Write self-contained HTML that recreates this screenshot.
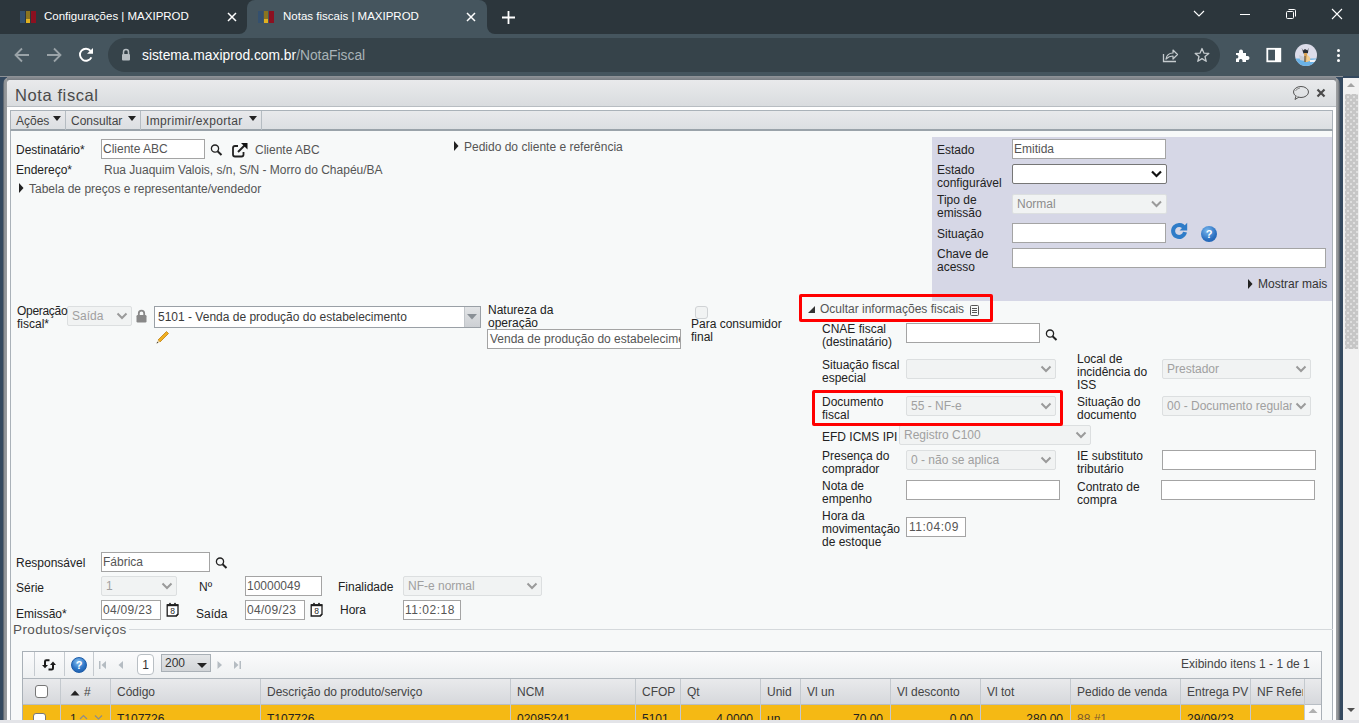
<!DOCTYPE html>
<html><head><meta charset="utf-8">
<style>
*{margin:0;padding:0;box-sizing:border-box}
html,body{width:1359px;height:723px;overflow:hidden;background:#34495f;font-family:"Liberation Sans",sans-serif}
.a{position:absolute}
.t{position:absolute;white-space:nowrap;font-size:12px;color:#222;line-height:13px}
.g{color:#555}
.inp{position:absolute;background:#fff;border:1px solid #a4a4a4}
.dis{position:absolute;background:#f1f3f3;border:1px solid #dcdfe0;border-radius:2px}
.chev{position:absolute;width:7px;height:7px;border-right:2px solid #9a9a9a;border-bottom:2px solid #9a9a9a;transform:rotate(45deg)}
</style></head><body>

<!-- CHROME TAB BAR -->
<div class="a" style="left:0;top:0;width:1359px;height:34px;background:#2c363c"></div>
<!-- active tab -->
<div class="a" style="left:247px;top:0;width:240px;height:34px;background:#45555e;border-radius:8px 8px 0 0"></div>
<div class="a" style="left:239px;top:26px;width:8px;height:8px;background:#45555e"></div>
<div class="a" style="left:239px;top:18px;width:8px;height:16px;background:#2c363c;border-bottom-right-radius:8px"></div>
<div class="a" style="left:487px;top:26px;width:8px;height:8px;background:#45555e"></div>
<div class="a" style="left:487px;top:18px;width:8px;height:16px;background:#2c363c;border-bottom-left-radius:8px"></div>

<!-- favicons -->
<div class="a" style="left:20px;top:11px;width:5px;height:12px;background:#34506e"></div>
<div class="a" style="left:26px;top:11px;width:4px;height:12px;background:#8a7420"></div>
<div class="a" style="left:26px;top:19px;width:4px;height:4px;background:#e0b020"></div>
<div class="a" style="left:31px;top:11px;width:5px;height:12px;background:#8c1020"></div>
<div class="a" style="left:258px;top:11px;width:5px;height:12px;background:#34506e"></div>
<div class="a" style="left:264px;top:11px;width:4px;height:12px;background:#8a7420"></div>
<div class="a" style="left:264px;top:19px;width:4px;height:4px;background:#e0b020"></div>
<div class="a" style="left:269px;top:11px;width:5px;height:12px;background:#8c1020"></div>

<div class="t" style="left:44px;top:10px;font-size:11.5px;color:#fff">Configurações | MAXIPROD</div>
<div class="t" style="left:283px;top:10px;font-size:11.5px;color:#fff">Notas fiscais | MAXIPROD</div>
<svg class="a" style="left:227px;top:12px" width="10" height="10"><path d="M1 1L9 9M9 1L1 9" stroke="#fff" stroke-width="1.5"/></svg>
<svg class="a" style="left:466px;top:12px" width="10" height="10"><path d="M1 1L9 9M9 1L1 9" stroke="#fff" stroke-width="1.5"/></svg>
<svg class="a" style="left:502px;top:11px" width="13" height="13"><path d="M6.5 0V13M0 6.5H13" stroke="#fff" stroke-width="1.8"/></svg>

<!-- window controls -->
<svg class="a" style="left:1193px;top:10px" width="12" height="8"><path d="M1 1L6 6L11 1" stroke="#fff" stroke-width="1.1" fill="none"/></svg>
<div class="a" style="left:1240px;top:14px;width:10px;height:1px;background:#fff"></div>
<svg class="a" style="left:1285px;top:8px" width="12" height="12"><rect x="1.5" y="3.5" width="7" height="7" rx="1" stroke="#fff" fill="none"/><path d="M3.5 1.5H9.5Q10.5 1.5 10.5 2.5V8.5" stroke="#fff" fill="none"/></svg>
<svg class="a" style="left:1331px;top:8px" width="12" height="12"><path d="M1 1L11 11M11 1L1 11" stroke="#fff" stroke-width="1.1"/></svg>

<!-- TOOLBAR -->
<div class="a" style="left:0;top:34px;width:1359px;height:42px;background:#45555e"></div>
<div class="a" style="left:108px;top:38px;width:1112px;height:34px;background:#36434a;border-radius:17px"></div>
<svg class="a" style="left:14px;top:47px" width="16" height="16"><path d="M15 8H2M8 1.5L1.5 8L8 14.5" stroke="#9aa3a8" stroke-width="1.8" fill="none"/></svg>
<svg class="a" style="left:46px;top:47px" width="16" height="16"><path d="M1 8H14M8 1.5L14.5 8L8 14.5" stroke="#9aa3a8" stroke-width="1.8" fill="none"/></svg>
<svg class="a" style="left:78px;top:47px" width="16" height="16"><path d="M13.4 10.3A6 6 0 1 1 12.6 3.9" stroke="#fff" stroke-width="1.9" fill="none"/><path d="M15 1V6.7H9Z" fill="#fff"/></svg>
<svg class="a" style="left:121px;top:48px" width="10" height="13"><path d="M2.5 6V4A2.5 2.5 0 0 1 7.5 4V6" stroke="#b8bfc3" stroke-width="1.5" fill="none"/><rect x="1" y="6" width="8" height="6.5" rx="1" fill="#b8bfc3"/></svg>
<div class="t" style="left:142px;top:48px;font-size:13.8px;line-height:16px;color:#fff">sistema.maxiprod.com.br<span style="color:#a9b3b8">/NotaFiscal</span></div>

<svg class="a" style="left:1162px;top:47px" width="17" height="16"><path d="M1.5 7V14.5H14" stroke="#c5cbce" stroke-width="1.3" fill="none"/><path d="M4 12Q5 6 11 6V3L15.5 7.5L11 12V9Q7 9 4 12Z" stroke="#c5cbce" stroke-width="1.2" fill="none" stroke-linejoin="round"/></svg>
<svg class="a" style="left:1194px;top:47px" width="16" height="16"><path d="M8 1.5L9.9 6.1L14.8 6.4L11 9.5L12.2 14.3L8 11.6L3.8 14.3L5 9.5L1.2 6.4L6.1 6.1Z" stroke="#c5cbce" stroke-width="1.3" fill="none" stroke-linejoin="round"/></svg>
<svg class="a" style="left:1234px;top:47px" width="16" height="16"><path d="M2 6H5V4.5A2 2 0 0 1 9 4.5V6H12V9H13.5A2 2 0 0 1 13.5 13H12V15H8.5V13.5A1.8 1.8 0 0 0 5 13.5V15H2V11.5H3A1.8 1.8 0 0 0 3 8H2Z" fill="#fff"/></svg>
<svg class="a" style="left:1266px;top:47px" width="16" height="16"><rect x="1.3" y="1.8" width="13" height="12.5" stroke="#fff" stroke-width="1.8" fill="none"/><rect x="9" y="2" width="5" height="12" fill="#fff"/></svg>
<svg class="a" style="left:1295px;top:44px" width="22" height="22"><defs><clipPath id="av"><circle cx="11" cy="11" r="11"/></clipPath></defs><g clip-path="url(#av)"><rect width="22" height="22" fill="#dcdce9"/><rect y="14.5" width="22" height="8" fill="#6ab2e6"/><path d="M6.5 3.5L8 6.5L10 5L12.5 6.5L13.5 3.5L13 9L11 10L8.5 9.5Z" fill="#2a2e34"/><path d="M9 9L12 9L12.5 18L9.5 18Z" fill="#d9a050"/><path d="M12 11Q15.5 12 15.5 17L11 18Z" fill="#f0cc90"/><path d="M4 11L9 13L9 17L5 16Z" fill="#c8ccd4"/><path d="M15 16L21 15.5L21 18L15 18Z" fill="#f4f4f6"/><path d="M10 12V18" stroke="#555" stroke-width="1"/></g></svg>
<div class="a" style="left:1337px;top:49px;width:3px;height:3px;border-radius:50%;background:#fff"></div>
<div class="a" style="left:1337px;top:54px;width:3px;height:3px;border-radius:50%;background:#fff"></div>
<div class="a" style="left:1337px;top:59px;width:3px;height:3px;border-radius:50%;background:#fff"></div>

<!-- PAGE BACKGROUND -->
<div class="a" style="left:0;top:76px;width:1343px;height:1px;background:#8d9196"></div>
<div class="a" style="left:3px;top:77px;width:1337px;height:646px;background:linear-gradient(to right,#4c5560 0,#8e9296 1.5px,#9c9ea0 4px,#8e9296 8px,#8e9296 calc(100% - 5px),#a0a2a4 calc(100% - 4px),#909396 calc(100% - 2px),#4e5660 100%);border-radius:7px 7px 0 0"></div>
<div class="a" style="left:7px;top:77px;width:1329px;height:3px;background:linear-gradient(#8a8e93,#787d83)"></div>
<!-- page scrollbar -->
<div class="a" style="left:1343px;top:78px;width:16px;height:645px;background:#f1f1f1"></div>
<div class="a" style="left:1345px;top:94px;width:13px;height:255px;background-color:#c6c6c6;background-image:radial-gradient(circle,#dedede 0.9px,transparent 1.2px),radial-gradient(circle,#dedede 0.9px,transparent 1.2px);background-size:6px 6px;background-position:0 0,3px 3px"></div>
<svg class="a" style="left:1346px;top:82px" width="10" height="6"><path d="M1 5L5 1L9 5Z" fill="#a3a3a3"/></svg>
<svg class="a" style="left:1346px;top:707px" width="10" height="6"><path d="M1 1L5 5L9 1Z" fill="#505050"/></svg>

<!-- DIALOG -->
<div class="a" style="left:7px;top:80px;width:1329px;height:643px;background:#fff;border-radius:4px 4px 0 0;overflow:hidden">
  <div class="a" style="left:0;top:0;width:1329px;height:27px;background:linear-gradient(#e9eaec,#d9dcdf);border-bottom:1px solid #b8bdc2"></div>
</div>
<div class="t" style="left:15px;top:85px;font-size:16.5px;line-height:20px;color:#4a4a4a;letter-spacing:0.6px">Nota fiscal</div>
<svg class="a" style="left:1292px;top:85px" width="18" height="16"><ellipse cx="9" cy="7" rx="7.5" ry="5.5" stroke="#555" stroke-width="1" fill="none"/><path d="M3.5 6Q4.5 3.5 8 3" stroke="#777" stroke-width="0.8" fill="none"/><path d="M4 11L3 14.5L7 12" stroke="#555" fill="#e0e2e4"/></svg>
<svg class="a" style="left:1316px;top:88px" width="10" height="10"><path d="M1.5 1.5L8.5 8.5M8.5 1.5L1.5 8.5" stroke="#4a4a4a" stroke-width="2.2"/></svg>

<!-- menu toolbar -->
<div class="a" style="left:10px;top:110px;width:1323px;height:21px;background:linear-gradient(#e8e9eb,#dcdfe2);border:1px solid #aab2b9;border-bottom:2px solid #9aa3aa"></div>

<!-- content area -->
<div class="a" style="left:10px;top:131px;width:1323px;height:592px;background:#f7f9f9;border-left:1px solid #aab2b9;border-right:1px solid #aab2b9"></div>


<!-- ===== BODY SECTION 1 ===== -->
<div class="t" style="left:16px;top:144px">Destinatário*</div>
<div class="inp" style="left:101px;top:139px;width:104px;height:20px"></div>
<div class="t g" style="left:103px;top:143px">Cliente ABC</div>
<svg class="a" style="left:210px;top:144px" width="13" height="12"><circle cx="5" cy="4.6" r="3.6" stroke="#222" stroke-width="1.3" fill="none"/><path d="M7.6 7.3L11.5 11" stroke="#222" stroke-width="2"/></svg>
<svg class="a" style="left:231px;top:142px" width="18" height="16"><path d="M7 4H4Q2 4 2 6V12.5Q2 14.5 4 14.5H10.5Q12.5 14.5 12.5 12.5V10" stroke="#222" stroke-width="1.8" fill="none"/><path d="M7 10L14.5 2.5" stroke="#222" stroke-width="2"/><path d="M10 1H16.5V7.5Z" fill="#111"/></svg>
<div class="t g" style="left:255px;top:144px">Cliente ABC</div>
<div class="t" style="left:16px;top:164px">Endereço*</div>
<div class="t g" style="left:104px;top:164px">Rua Juaquim Valois, s/n, S/N - Morro do Chapéu/BA</div>
<svg class="a" style="left:19px;top:183px" width="5" height="10"><path d="M0 0L4.5 5L0 10Z" fill="#222"/></svg>
<div class="t g" style="left:29px;top:183px">Tabela de preços e representante/vendedor</div>
<svg class="a" style="left:454px;top:141px" width="5" height="10"><path d="M0 0L4.5 5L0 10Z" fill="#222"/></svg>
<div class="t g" style="left:464px;top:141px">Pedido do cliente e referência</div>

<!-- Estado panel -->
<div class="a" style="left:932px;top:137px;width:400px;height:164px;background:#d6d7e6"></div>
<div class="t" style="left:937px;top:144px">Estado</div>
<div class="inp" style="left:1012px;top:139px;width:154px;height:20px"></div>
<div class="t g" style="left:1014px;top:143px">Emitida</div>
<div class="t" style="left:937px;top:164px">Estado</div>
<div class="t" style="left:937px;top:177px">configurável</div>
<div class="a" style="left:1012px;top:164px;width:155px;height:20px;background:#fff;border:1px solid #767676;border-radius:2px"></div>
<svg class="a" style="left:1151px;top:170px" width="11" height="8"><path d="M1 1.5L5.5 6L10 1.5" stroke="#111" stroke-width="2.2" fill="none"/></svg>
<div class="t" style="left:937px;top:194px">Tipo de</div>
<div class="t" style="left:937px;top:207px">emissão</div>
<div class="dis" style="left:1012px;top:194px;width:155px;height:20px"></div>
<div class="t" style="left:1017px;top:198px;color:#8c8c8c">Normal</div>
<svg class="a" style="left:1151px;top:200px" width="11" height="8"><path d="M1 1.5L5.5 6L10 1.5" stroke="#9a9a9a" stroke-width="2" fill="none"/></svg>
<div class="t" style="left:937px;top:228px">Situação</div>
<div class="inp" style="left:1012px;top:223px;width:154px;height:20px"></div>
<svg class="a" style="left:1170px;top:222px" width="18" height="18"><path d="M15 10.2A6 6 0 1 1 14.2 5.8" stroke="#2f7cc8" stroke-width="4" fill="none"/><path d="M17.2 0.8V8.6H9.6Z" fill="#2f7cc8"/></svg>
<div class="a" style="left:1201px;top:226px;width:16px;height:16px;border-radius:50%;background:radial-gradient(circle at 40% 30%,#7ab8ee,#2a6fc0 60%,#1d5aa8);color:#fff;font:bold 11px/16px 'Liberation Sans';text-align:center">?</div>
<div class="t" style="left:937px;top:248px">Chave de</div>
<div class="t" style="left:937px;top:261px">acesso</div>
<div class="inp" style="left:1012px;top:248px;width:314px;height:20px"></div>
<svg class="a" style="left:1248px;top:279px" width="5" height="10"><path d="M0 0L4.5 5L0 10Z" fill="#222"/></svg>
<div class="t" style="left:1258px;top:278px;color:#333">Mostrar mais</div>


<!-- menu items -->
<div class="t" style="left:16px;top:115px;color:#444">Ações</div>
<svg class="a" style="left:53px;top:116px" width="8" height="5"><path d="M0 0H8L4 5Z" fill="#222"/></svg>
<div class="a" style="left:65px;top:111px;width:1px;height:19px;background:#b5bcc2"></div>
<div class="t" style="left:71px;top:115px;color:#444">Consultar</div>
<svg class="a" style="left:128px;top:116px" width="8" height="5"><path d="M0 0H8L4 5Z" fill="#222"/></svg>
<div class="a" style="left:140px;top:111px;width:1px;height:19px;background:#b5bcc2"></div>
<div class="t" style="left:146px;top:115px;color:#444;letter-spacing:0.35px">Imprimir/exportar</div>
<svg class="a" style="left:249px;top:116px" width="8" height="5"><path d="M0 0H8L4 5Z" fill="#222"/></svg>
<div class="a" style="left:261px;top:111px;width:1px;height:19px;background:#b5bcc2"></div>

<!-- Operacao fiscal row -->
<div class="t" style="left:17px;top:305px;letter-spacing:-0.3px;z-index:2">Operação</div>
<div class="t" style="left:17px;top:318px">fiscal*</div>
<div class="dis" style="left:67px;top:306px;width:65px;height:20px"></div>
<div class="t" style="left:72px;top:310px;color:#a0a0a0;width:43px;overflow:hidden">Saída</div>
<svg class="a" style="left:116px;top:312px" width="12" height="8"><path d="M1.5 1.5L6 6L10.5 1.5" stroke="#9a9a9a" stroke-width="2" fill="none"/></svg>
<svg class="a" style="left:136px;top:309px" width="11" height="14"><path d="M2.8 6.5V4.3A2.7 2.7 0 0 1 8.2 4.3V6.5" stroke="#888" stroke-width="1.8" fill="none"/><rect x="0.5" y="6" width="10" height="7.5" rx="1.2" fill="#888"/></svg>
<div class="inp" style="left:154px;top:306px;width:327px;height:22px;border-color:#9aa0a6"></div>
<div class="a" style="left:464px;top:307px;width:16px;height:20px;background:linear-gradient(#e2e4e6,#cdd0d4);border-left:1px solid #c2c6ca"></div>
<svg class="a" style="left:467px;top:314px" width="10" height="6"><path d="M0 0H10L5 5.5Z" fill="#8a9096"/></svg>
<div class="t" style="left:158px;top:311px;color:#3a3a3a">5101 - Venda de produção do estabelecimento</div>
<svg class="a" style="left:155px;top:330px" width="15" height="15"><path d="M3 10L11.5 1.5L13.5 3.5L5 12Z" fill="#f0b020" stroke="#c08010" stroke-width="0.8"/><path d="M3 10L1.5 13.5L5 12Z" fill="#e8d0a0"/><path d="M1.5 13.5L2.3 11.7L3.3 12.7Z" fill="#333"/></svg>
<div class="t" style="left:488px;top:304px">Natureza da</div>
<div class="t" style="left:488px;top:317px">operação</div>
<div class="inp" style="left:487px;top:329px;width:194px;height:20px;overflow:hidden"><div class="t" style="left:2px;top:3px;color:#555">Venda de produção do estabelecimento</div></div>
<div class="a" style="left:695px;top:306px;width:13px;height:13px;border:1px solid #d0d3d5;border-radius:3px;background:#f1f3f3"></div>
<div class="t" style="left:691px;top:318px">Para consumidor</div>
<div class="t" style="left:691px;top:331px">final</div>

<!-- fiscal info -->
<div class="a" style="left:799px;top:294px;width:194px;height:28px;border:3px solid #f00;border-radius:2px"></div>
<svg class="a" style="left:808px;top:306px" width="7" height="7"><path d="M7 0V7H0Z" fill="#333"/></svg>
<div class="t g" style="left:820px;top:303px">Ocultar informações fiscais</div>
<svg class="a" style="left:969px;top:304px" width="11" height="12"><rect x="1.5" y="1.5" width="8" height="10" rx="1" stroke="#555" fill="none"/><path d="M3 4.5H8M3 6.5H8M3 8.5H8" stroke="#555"/></svg>
<div class="t" style="left:822px;top:323px">CNAE fiscal</div>
<div class="t" style="left:822px;top:336px">(destinatário)</div>
<div class="inp" style="left:906px;top:323px;width:134px;height:20px"></div>
<svg class="a" style="left:1045px;top:329px" width="13" height="12"><circle cx="5" cy="4.6" r="3.6" stroke="#222" stroke-width="1.3" fill="none"/><path d="M7.6 7.3L11.5 11" stroke="#222" stroke-width="2"/></svg>
<div class="t" style="left:822px;top:359px">Situação fiscal</div>
<div class="t" style="left:822px;top:372px">especial</div>
<div class="dis" style="left:906px;top:359px;width:150px;height:20px"></div>
<svg class="a" style="left:1040px;top:365px" width="12" height="8"><path d="M1.5 1.5L6 6L10.5 1.5" stroke="#9a9a9a" stroke-width="2" fill="none"/></svg>
<div class="t" style="left:1077px;top:353px">Local de</div>
<div class="t" style="left:1077px;top:366px">incidência do</div>
<div class="t" style="left:1077px;top:379px">ISS</div>
<div class="dis" style="left:1162px;top:359px;width:149px;height:20px"></div>
<div class="t" style="left:1167px;top:363px;color:#a0a0a0;width:127px;overflow:hidden">Prestador</div>
<svg class="a" style="left:1295px;top:365px" width="12" height="8"><path d="M1.5 1.5L6 6L10.5 1.5" stroke="#9a9a9a" stroke-width="2" fill="none"/></svg>
<div class="t" style="left:822px;top:396px">Documento</div>
<div class="t" style="left:822px;top:409px">fiscal</div>
<div class="dis" style="left:906px;top:396px;width:150px;height:20px"></div>
<div class="t" style="left:911px;top:400px;color:#a0a0a0;width:128px;overflow:hidden">55 - NF-e</div>
<svg class="a" style="left:1040px;top:402px" width="12" height="8"><path d="M1.5 1.5L6 6L10.5 1.5" stroke="#9a9a9a" stroke-width="2" fill="none"/></svg>
<div class="t" style="left:1077px;top:396px">Situação do</div>
<div class="t" style="left:1077px;top:409px">documento</div>
<div class="dis" style="left:1162px;top:396px;width:149px;height:20px"></div>
<div class="t" style="left:1167px;top:400px;color:#a0a0a0;width:125px;overflow:hidden">00 - Documento regular</div>
<svg class="a" style="left:1295px;top:402px" width="12" height="8"><path d="M1.5 1.5L6 6L10.5 1.5" stroke="#9a9a9a" stroke-width="2" fill="none"/></svg>
<div class="dis" style="left:899px;top:425px;width:192px;height:20px"></div>
<div class="t" style="left:904px;top:429px;color:#a0a0a0;width:170px;overflow:hidden">Registro C100</div>
<svg class="a" style="left:1075px;top:431px" width="12" height="8"><path d="M1.5 1.5L6 6L10.5 1.5" stroke="#9a9a9a" stroke-width="2" fill="none"/></svg>
<div class="a" style="left:812px;top:390px;width:251px;height:36px;border:3px solid #f00;border-radius:2px"></div>
<div class="t" style="left:822px;top:431px">EFD ICMS IPI</div>
<div class="t" style="left:822px;top:450px">Presença do</div>
<div class="t" style="left:822px;top:463px">comprador</div>
<div class="dis" style="left:906px;top:450px;width:150px;height:20px"></div>
<div class="t" style="left:911px;top:454px;color:#a0a0a0;width:128px;overflow:hidden">0 - não se aplica</div>
<svg class="a" style="left:1040px;top:456px" width="12" height="8"><path d="M1.5 1.5L6 6L10.5 1.5" stroke="#9a9a9a" stroke-width="2" fill="none"/></svg>
<div class="t" style="left:1077px;top:450px">IE substituto</div>
<div class="t" style="left:1077px;top:463px">tributário</div>
<div class="inp" style="left:1162px;top:450px;width:154px;height:20px"></div>
<div class="t" style="left:822px;top:480px">Nota de</div>
<div class="t" style="left:822px;top:493px">empenho</div>
<div class="inp" style="left:906px;top:480px;width:154px;height:20px"></div>
<div class="t" style="left:1077px;top:481px">Contrato de</div>
<div class="t" style="left:1077px;top:494px">compra</div>
<div class="inp" style="left:1161px;top:480px;width:154px;height:20px"></div>
<div class="t" style="left:822px;top:510px">Hora da</div>
<div class="t" style="left:822px;top:523px">movimentação</div>
<div class="t" style="left:822px;top:536px">de estoque</div>
<div class="inp" style="left:906px;top:517px;width:60px;height:20px"></div>
<div class="t" style="left:909px;top:521px;color:#555;letter-spacing:0.5px">11:04:09</div>

<!-- section 3 -->
<div class="t" style="left:16px;top:557px">Responsável</div>
<div class="inp" style="left:101px;top:552px;width:109px;height:20px"></div>
<div class="t" style="left:103px;top:556px;color:#555">Fábrica</div>
<svg class="a" style="left:215px;top:557px" width="13" height="12"><circle cx="5" cy="4.6" r="3.6" stroke="#222" stroke-width="1.3" fill="none"/><path d="M7.6 7.3L11.5 11" stroke="#222" stroke-width="2"/></svg>
<div class="t" style="left:16px;top:582px">Série</div>
<div class="dis" style="left:101px;top:576px;width:76px;height:20px"></div>
<div class="t" style="left:106px;top:580px;color:#a0a0a0;width:54px;overflow:hidden">1</div>
<svg class="a" style="left:161px;top:582px" width="12" height="8"><path d="M1.5 1.5L6 6L10.5 1.5" stroke="#9a9a9a" stroke-width="2" fill="none"/></svg>
<div class="t" style="left:199px;top:581px">Nº</div>
<div class="inp" style="left:245px;top:576px;width:77px;height:20px"></div>
<div class="t" style="left:247px;top:580px;color:#555">10000049</div>
<div class="t" style="left:338px;top:581px">Finalidade</div>
<div class="dis" style="left:403px;top:576px;width:139px;height:20px"></div>
<div class="t" style="left:408px;top:580px;color:#a0a0a0;width:117px;overflow:hidden">NF-e normal</div>
<svg class="a" style="left:526px;top:582px" width="12" height="8"><path d="M1.5 1.5L6 6L10.5 1.5" stroke="#9a9a9a" stroke-width="2" fill="none"/></svg>
<div class="t" style="left:16px;top:608px">Emissão*</div>
<div class="inp" style="left:101px;top:600px;width:60px;height:20px"></div>
<div class="t" style="left:103px;top:604px;color:#555;letter-spacing:0.3px">04/09/23</div>
<svg class="a" style="left:166px;top:602px" width="14" height="15"><path d="M1.2 3H12V12.3L10.3 14H1.2Z" stroke="#1e1e1e" stroke-width="1.3" fill="#fff"/><path d="M1 3.2H12.2" stroke="#1e1e1e" stroke-width="2"/><circle cx="4" cy="1.6" r="0.9" fill="#1e1e1e"/><circle cx="9" cy="1.6" r="0.9" fill="#1e1e1e"/><path d="M10 14L12 12" stroke="#1e1e1e" stroke-width="1.3"/><text x="6.6" y="12.2" font-family="Liberation Sans" font-size="8.5" text-anchor="middle" fill="#1e1e1e">8</text></svg>
<div class="t" style="left:196px;top:608px">Saída</div>
<div class="inp" style="left:245px;top:600px;width:60px;height:20px"></div>
<div class="t" style="left:247px;top:604px;color:#555;letter-spacing:0.3px">04/09/23</div>
<svg class="a" style="left:310px;top:602px" width="14" height="15"><path d="M1.2 3H12V12.3L10.3 14H1.2Z" stroke="#1e1e1e" stroke-width="1.3" fill="#fff"/><path d="M1 3.2H12.2" stroke="#1e1e1e" stroke-width="2"/><circle cx="4" cy="1.6" r="0.9" fill="#1e1e1e"/><circle cx="9" cy="1.6" r="0.9" fill="#1e1e1e"/><path d="M10 14L12 12" stroke="#1e1e1e" stroke-width="1.3"/><text x="6.6" y="12.2" font-family="Liberation Sans" font-size="8.5" text-anchor="middle" fill="#1e1e1e">8</text></svg>
<div class="t" style="left:340px;top:604px">Hora</div>
<div class="inp" style="left:403px;top:600px;width:58px;height:20px"></div>
<div class="t" style="left:405px;top:604px;color:#555;letter-spacing:0.5px">11:02:18</div>

<div class="a" style="left:129px;top:629px;width:1204px;height:1px;background:#d5d9dc"></div>
<div class="t" style="left:13px;top:622px;font-size:13.5px;line-height:15px;color:#555;letter-spacing:0.38px">Produtos/serviços</div>

<!-- GRID -->
<div class="a" style="left:22px;top:651px;width:1300px;height:72px;border:1px solid #a9b0b7;border-bottom:none;background:#f9fafb"></div>
<div class="a" style="left:23px;top:652px;width:1298px;height:26px;background:linear-gradient(#fbfbfc,#eef0f1)"></div>
<div class="a" style="left:34px;top:652px;width:1px;height:24px;background:#c5cacf"></div>
<div class="a" style="left:64px;top:652px;width:1px;height:24px;background:#c5cacf"></div>
<div class="a" style="left:93px;top:652px;width:1px;height:24px;background:#c5cacf"></div>
<svg class="a" style="left:38px;top:655px" width="20" height="18"><path d="M11.5 5.2H8.3Q7 5.2 7 6.5V10.5" stroke="#1a1a1a" stroke-width="2" fill="none"/><path d="M4 10H10L7 13.2Z" fill="#1a1a1a"/><path d="M10.5 14.5H13.7Q15 14.5 15 13.2V9.5" stroke="#1a1a1a" stroke-width="2" fill="none"/><path d="M12 10H18L15 6.6Z" fill="#1a1a1a"/></svg>
<div class="a" style="left:71px;top:657px;width:16px;height:16px;border-radius:50%;background:radial-gradient(circle at 45% 30%,#8cc4f2,#2b74c6 55%,#1a55a0);border:1px solid #1d5ca8"></div>
<div class="t" style="left:71px;top:658px;width:16px;text-align:center;font:bold 11px/14px 'Liberation Sans';color:#fff">?</div>
<svg class="a" style="left:99px;top:661px" width="8" height="9"><rect x="0" y="0" width="1.5" height="8" fill="#b5bcc2"/><path d="M7 0V8L2.5 4Z" fill="#b5bcc2"/></svg>
<svg class="a" style="left:118px;top:661px" width="6" height="9"><path d="M5 0V8L0.5 4Z" fill="#b5bcc2"/></svg>
<div class="a" style="left:137px;top:654px;width:17px;height:21px;border:1px solid #b9bfc4;border-radius:4px;background:#fff"></div>
<div class="t" style="left:137px;top:659px;width:17px;text-align:center;color:#333">1</div>
<div class="a" style="left:161px;top:654px;width:50px;height:18px;border:1px solid #a9b0b6;background:linear-gradient(#e4e6e8,#d2d5d8)"></div>
<div class="t" style="left:165px;top:657px;color:#333">200</div>
<svg class="a" style="left:197px;top:663px" width="10" height="5"><path d="M0 0H10L5 5Z" fill="#222"/></svg>
<svg class="a" style="left:217px;top:661px" width="6" height="9"><path d="M0.5 0V8L5 4Z" fill="#b5bcc2"/></svg>
<svg class="a" style="left:234px;top:661px" width="8" height="9"><path d="M0 0V8L4.5 4Z" fill="#b5bcc2"/><rect x="5.5" y="0" width="1.5" height="8" fill="#b5bcc2"/></svg>
<div class="t" style="left:1181px;top:658px;color:#444">Exibindo itens 1 - 1 de 1</div>

<div class="a" style="left:23px;top:678px;width:1298px;height:27px;background:linear-gradient(#e9eaec,#d6d8dc);border-top:1px solid #aeb5bb;border-bottom:1px solid #b8bec4"></div>
<div class="a" style="left:23px;top:705px;width:1281px;height:15px;background:#f5b914"></div>
<div class="a" style="left:1304px;top:705px;width:17px;height:15px;background:#fafafa"></div>
<svg class="a" style="left:1308px;top:708px" width="10" height="6"><path d="M0.5 5L5 0.5L9.5 5Z" fill="#b0b0b0"/></svg>
<div class="a" style="left:60px;top:679px;width:1px;height:41px;background:#c4c9ce"></div>
<div class="a" style="left:110px;top:679px;width:1px;height:41px;background:#c4c9ce"></div>
<div class="a" style="left:260px;top:679px;width:1px;height:41px;background:#c4c9ce"></div>
<div class="a" style="left:510px;top:679px;width:1px;height:41px;background:#c4c9ce"></div>
<div class="a" style="left:635px;top:679px;width:1px;height:41px;background:#c4c9ce"></div>
<div class="a" style="left:680px;top:679px;width:1px;height:41px;background:#c4c9ce"></div>
<div class="a" style="left:760px;top:679px;width:1px;height:41px;background:#c4c9ce"></div>
<div class="a" style="left:800px;top:679px;width:1px;height:41px;background:#c4c9ce"></div>
<div class="a" style="left:890px;top:679px;width:1px;height:41px;background:#c4c9ce"></div>
<div class="a" style="left:980px;top:679px;width:1px;height:41px;background:#c4c9ce"></div>
<div class="a" style="left:1070px;top:679px;width:1px;height:41px;background:#c4c9ce"></div>
<div class="a" style="left:1180px;top:679px;width:1px;height:41px;background:#c4c9ce"></div>
<div class="a" style="left:1250px;top:679px;width:1px;height:41px;background:#c4c9ce"></div>
<div class="a" style="left:1304px;top:679px;width:1px;height:41px;background:#c4c9ce"></div>
<div class="t" style="left:117px;top:686px;width:142px;overflow:hidden;color:#444">Código</div>
<div class="t" style="left:267px;top:686px;width:242px;overflow:hidden;color:#444">Descrição do produto/serviço</div>
<div class="t" style="left:517px;top:686px;width:117px;overflow:hidden;color:#444">NCM</div>
<div class="t" style="left:642px;top:686px;width:37px;overflow:hidden;color:#444">CFOP</div>
<div class="t" style="left:687px;top:686px;width:72px;overflow:hidden;color:#444">Qt</div>
<div class="t" style="left:767px;top:686px;width:32px;overflow:hidden;color:#444">Unid</div>
<div class="t" style="left:807px;top:686px;width:82px;overflow:hidden;color:#444">Vl un</div>
<div class="t" style="left:897px;top:686px;width:82px;overflow:hidden;color:#444">Vl desconto</div>
<div class="t" style="left:987px;top:686px;width:82px;overflow:hidden;color:#444">Vl tot</div>
<div class="t" style="left:1077px;top:686px;width:102px;overflow:hidden;color:#444">Pedido de venda</div>
<div class="t" style="left:1187px;top:686px;width:62px;overflow:hidden;color:#444">Entrega PV</div>
<div class="t" style="left:1257px;top:686px;width:46px;overflow:hidden;color:#444">NF Referenciada</div>
<div class="a" style="left:35px;top:685px;width:13px;height:13px;border:1px solid #777;border-radius:3px;background:#fff"></div>
<svg class="a" style="left:70px;top:690px" width="10" height="6"><path d="M0.5 5.5L5 0.5L9.5 5.5Z" fill="#222"/></svg>
<div class="t" style="left:84px;top:686px;color:#444">#</div>
<div class="a" style="left:33px;top:713px;width:13px;height:13px;border:1px solid #777;border-radius:3px;background:#fff"></div>
<div class="t" style="left:70px;top:713px;color:#222">1</div>
<svg class="a" style="left:79px;top:714px" width="24" height="6"><path d="M1 5L4.5 1.5L8 5M16 1.5L19.5 5L23 1.5" stroke="#8c8c8c" stroke-width="1.2" fill="none"/></svg>
<div class="t" style="left:117px;top:713px;color:#222">T107726</div>
<div class="t" style="left:267px;top:713px;color:#222">T107726</div>
<div class="t" style="left:517px;top:713px;color:#222">02085241</div>
<div class="t" style="left:642px;top:713px;color:#222">5101</div>
<div class="t" style="left:680px;top:713px;width:73px;text-align:right;color:#222">4,0000</div>
<div class="t" style="left:767px;top:713px;color:#222">un</div>
<div class="t" style="left:800px;top:713px;width:83px;text-align:right;color:#222">70,00</div>
<div class="t" style="left:890px;top:713px;width:83px;text-align:right;color:#222">0,00</div>
<div class="t" style="left:980px;top:713px;width:83px;text-align:right;color:#222">280,00</div>
<div class="t" style="left:1077px;top:713px;color:#7a5a30">88 #1</div>
<div class="t" style="left:1187px;top:713px;color:#222">29/09/23</div>
<div class="a" style="left:0;top:720px;width:1359px;height:3px;background:#e3e4e8"></div>

</body></html>
